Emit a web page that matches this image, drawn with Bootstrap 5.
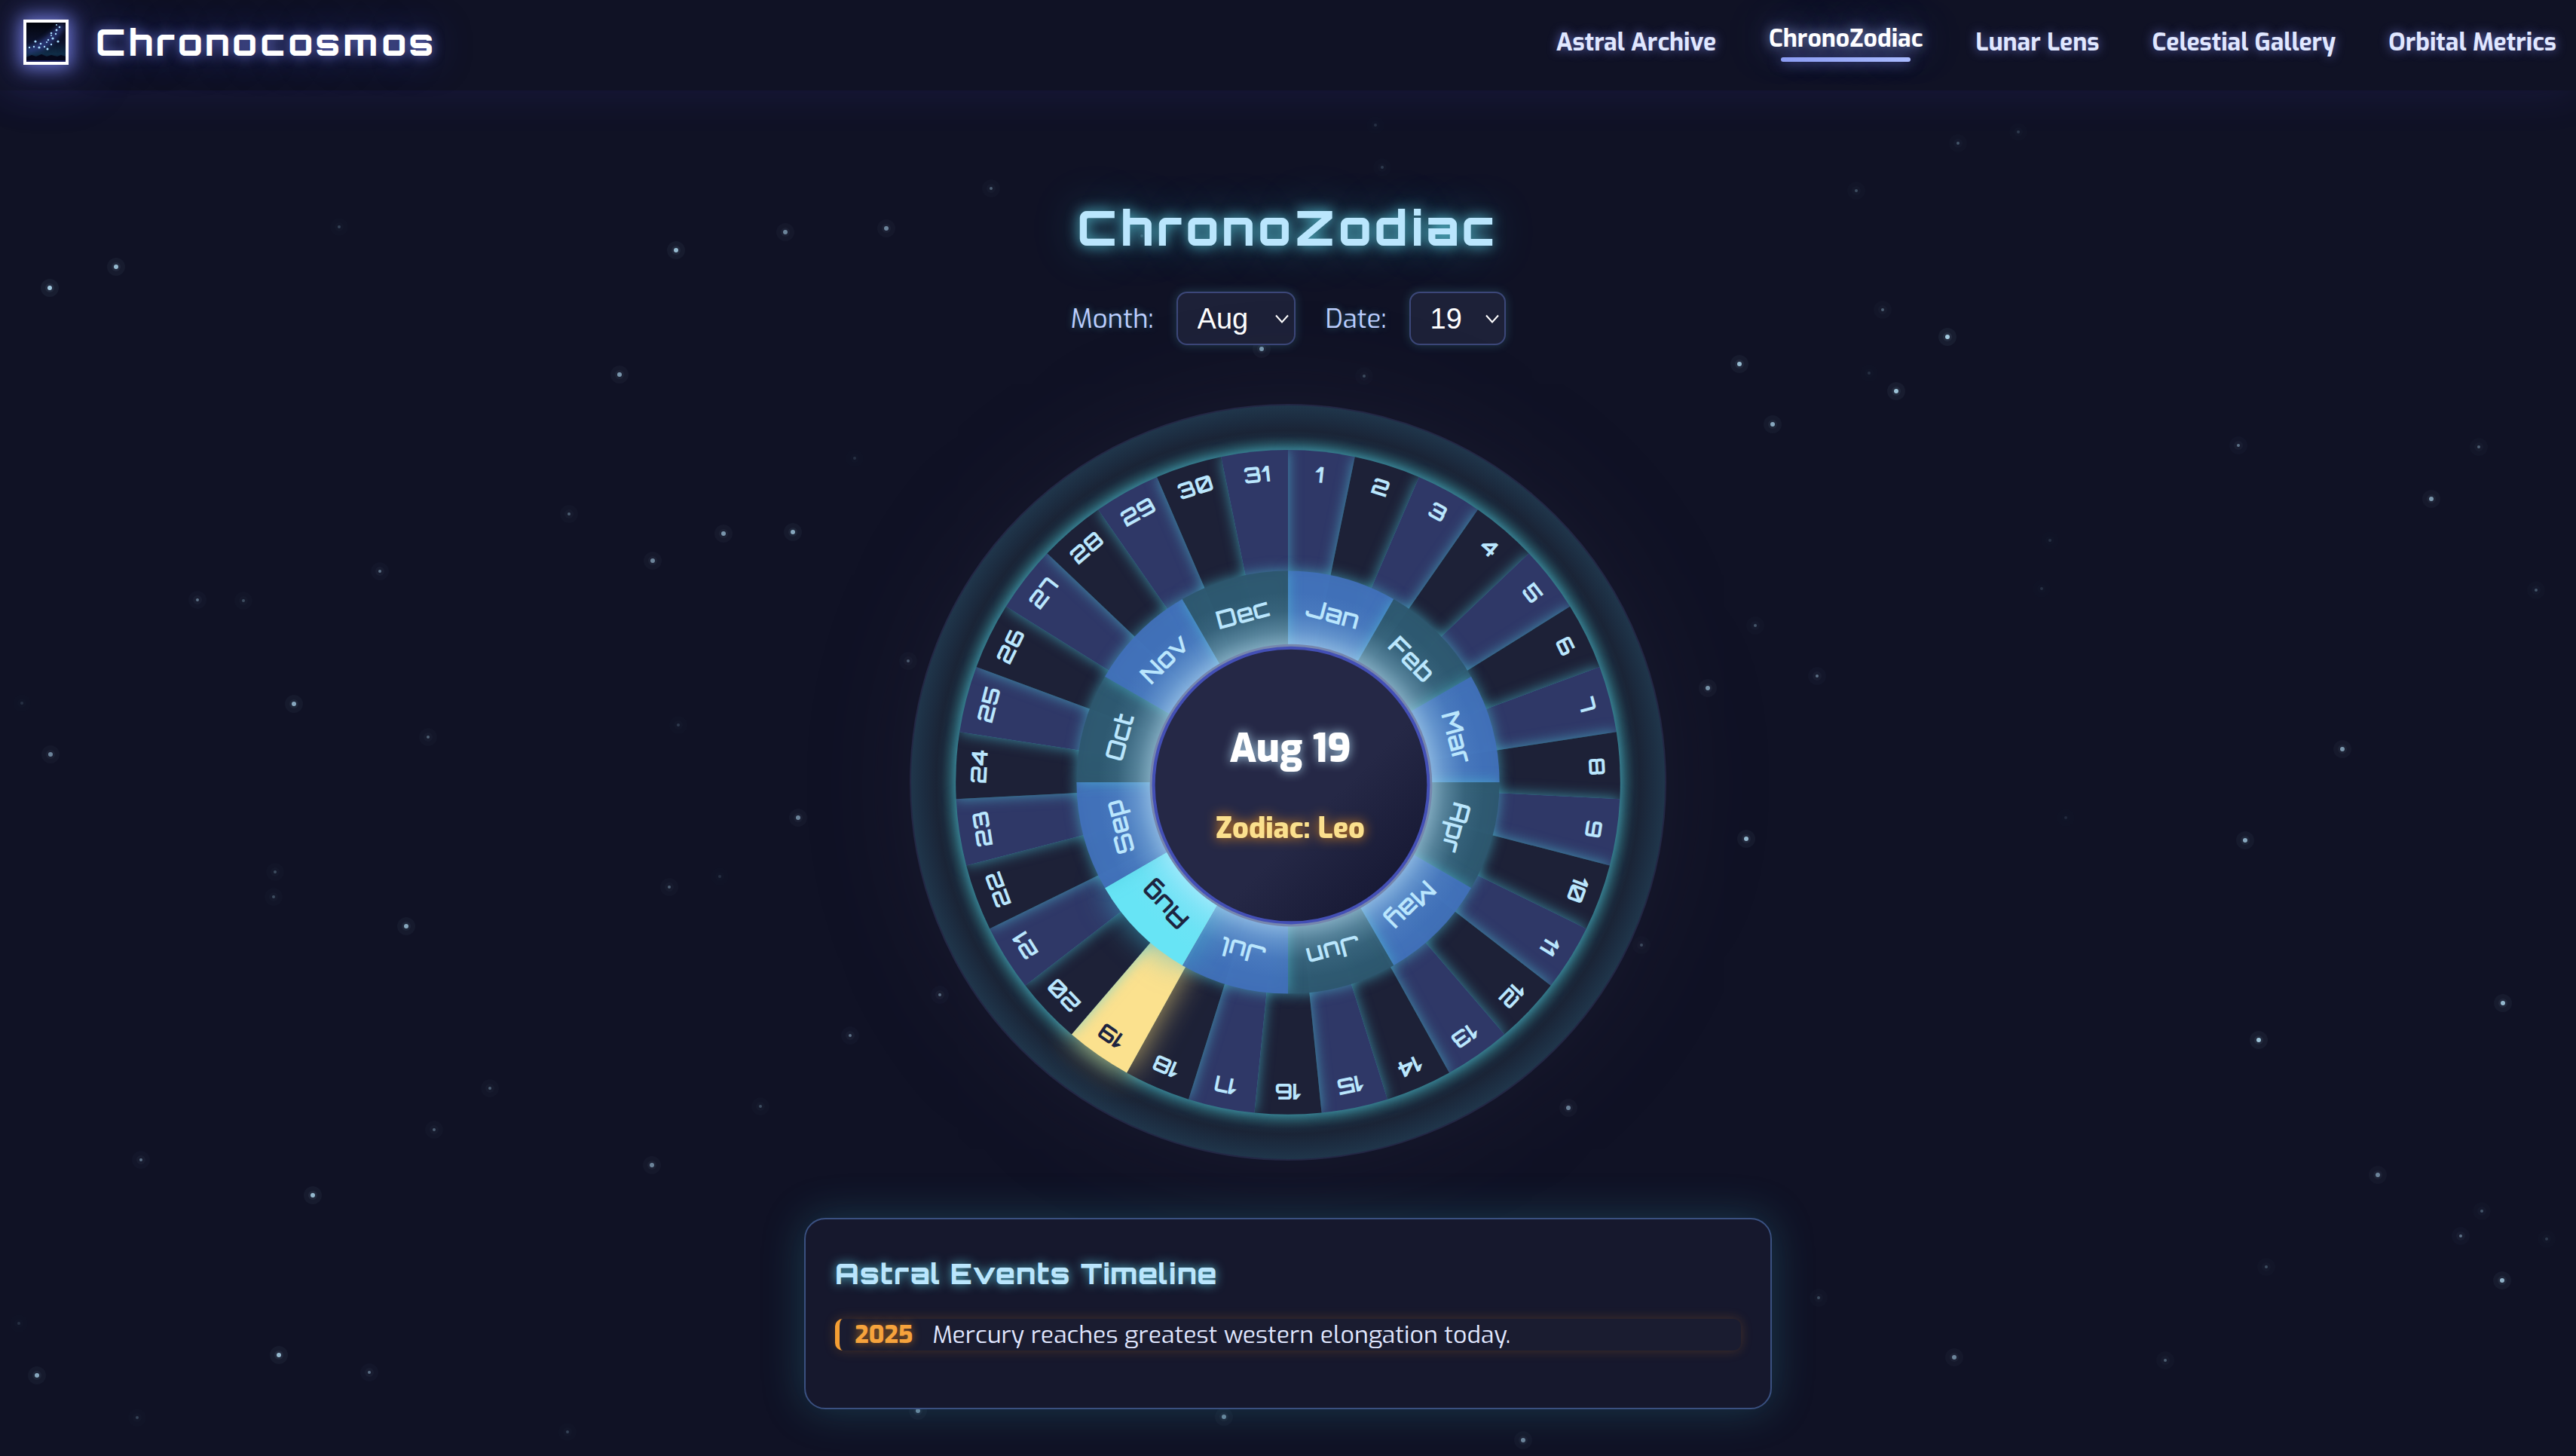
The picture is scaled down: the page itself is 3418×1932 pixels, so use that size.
<!DOCTYPE html>
<html lang="en">
<head>
<meta charset="utf-8">
<meta name="viewport" content="width=device-width, initial-scale=1">
<title>Chronocosmos – ChronoZodiac</title>
<link href="https://cdn.jsdelivr.net/npm/bootstrap@5.3.0/dist/css/bootstrap.min.css" rel="stylesheet">
<style>
:root{
  --display:"Orbitron","DejaVu Sans",Verdana,sans-serif;
  --text:"Exo",Roboto,sans-serif;
}
body{background:#101225;color:#e0e7ff;font-family:var(--text);overflow-x:hidden}
.star-field{position:absolute;inset:0;width:100%;height:100%;z-index:-1}
.star-field circle{fill:#bae6fd}

.site-bar{padding:26px 26px 34px 31px;box-shadow:0 0 60px rgba(79,70,229,.14)}
.site-logo{width:60px;height:60px;border:4px solid #fff;box-shadow:0 0 24px 4px rgba(129,140,248,.85),0 0 80px 8px rgba(79,90,220,.35)}
.site-logo svg{display:block;width:100%;height:100%}
.site-name{font:800 48px/60px var(--display);letter-spacing:4px;color:#fff;text-shadow:0 0 16px rgba(129,140,248,.75),0 0 50px rgba(60,80,220,.5)}
.site-nav{gap:70px}
.site-nav .nav-link{padding:0;font-size:32px;font-weight:700;line-height:50px;color:#e0e7ff;text-shadow:0 0 14px rgba(129,140,248,.7)}
.site-nav .nav-link.active{position:relative;padding-bottom:10px;color:#fff;text-shadow:0 0 16px rgba(165,180,252,.8),0 0 50px rgba(129,170,252,.6)}
.site-nav .nav-link.active::after{content:"";position:absolute;left:8%;right:8%;bottom:4px;height:6px;border-radius:3px;background:linear-gradient(90deg,#8b9cf2,#a9bbff);box-shadow:0 0 18px rgba(129,140,248,.7)}

.zodiac-page{padding:140px 24px 60px}
.page-title{font:800 64px/84px var(--display);letter-spacing:5px;color:#bae6fd;margin-bottom:43px;text-shadow:0 0 18px rgba(103,232,249,.85),0 0 60px rgba(56,189,210,.45)}
.picker-row{gap:40px;margin-bottom:78px}
.picker{gap:30px}
.picker label{font-size:35px;line-height:48px;color:#bccfff;text-shadow:0 0 10px rgba(103,232,249,.35)}
.picker .form-select{width:158px;height:71px;padding:0 36px 0 26px;font:400 38px/48px "Liberation Sans",Arial,sans-serif;color:#fff;background-color:#1d2138;border:2px solid #3c4779;border-radius:14px;box-shadow:0 0 14px rgba(103,232,249,.2);
  background-image:url("data:image/svg+xml,%3Csvg xmlns='http://www.w3.org/2000/svg' viewBox='0 0 18 12'%3E%3Cpath d='M1 1.5l8 9 8-9' fill='none' stroke='%23fff' stroke-width='2'/%3E%3C/svg%3E");background-position:right 7px center;background-size:18px 12px}
.picker .date-select{width:128px}

.wheel{width:1004px;max-width:100%;border-radius:50%;box-shadow:0 0 140px rgba(56,52,74,.24)}
.wheel svg{display:block;width:100%;height:auto;overflow:visible}
.wheel .slice{filter:drop-shadow(0 0 9px rgba(79,205,225,.62))}
.wheel .date-a{fill:#2f3867}
.wheel .date-b{fill:#1d2137}
.wheel .month-a{fill:#4170b9;fill-opacity:.95}
.wheel .month-b{fill:#2d566e;fill-opacity:.95}
.wheel .month-on{fill:#67e4f5;filter:drop-shadow(0 0 20px rgba(60,180,210,.7))}
.wheel .date-on{fill:#fbe18e;filter:drop-shadow(0 0 20px rgba(253,224,120,.7))}
.wheel .tick-label{fill:#bae6fd;text-anchor:middle}
.wheel .date-label{font:700 29px var(--display)}
.wheel .month-label{font:600 33px var(--display)}
.wheel .tick-label.is-on{fill:#1d2440}
.wheel .picked-date{font:800 52px var(--text);fill:#fff;text-anchor:middle;filter:drop-shadow(0 0 7px rgba(186,230,253,.8))}
.wheel .picked-sign{font:800 38px var(--text);fill:#fbe08d;text-anchor:middle;filter:drop-shadow(0 0 8px rgba(251,146,20,.9))}

.timeline{width:100%;max-width:1284px;margin-top:76px;padding:48px 39px 76px;background:#16182d;border:2px solid #3a5080;border-radius:28px;box-shadow:0 0 56px rgba(56,175,195,.26)}
.timeline h2{font:800 38px/48px var(--display);letter-spacing:1px;color:#bae6fd;margin-bottom:36px;text-shadow:0 0 14px rgba(103,232,249,.75)}
.timeline-item{gap:26px;padding-left:20px;font-size:32px;line-height:42px;color:#e0e7ff;background:#1a1c30;border-left:6px solid #f59e33;border-radius:10px;box-shadow:0 0 16px rgba(245,140,30,.22)}
.timeline-item .year{font-weight:800;color:#f6a33c;text-shadow:0 0 12px rgba(251,146,20,.6)}
</style>
<script src="https://cdn.jsdelivr.net/npm/bootstrap@5.3.0/dist/js/bootstrap.bundle.min.js"></script>
</head>
<body class="position-relative min-vh-100">
<svg class="star-field" id="stars" viewBox="0 0 3418 1932" preserveAspectRatio="xMidYMin slice" aria-hidden="true"></svg>

<header class="site-bar d-flex align-items-center justify-content-between">
  <a href="#" class="d-flex align-items-center text-decoration-none" style="gap:36px">
    <span class="site-logo">
      <svg viewBox="0 0 52 52" aria-hidden="true">
        <defs>
          <linearGradient id="lgSky" x1="0" y1="0" x2="0" y2="1"><stop offset="0" stop-color="#03050d"/><stop offset=".5" stop-color="#0c122c"/><stop offset=".8" stop-color="#102d47"/><stop offset="1" stop-color="#0b1026"/></linearGradient>
          <filter id="lgSoft" x="-30%" y="-30%" width="160%" height="160%"><feGaussianBlur stdDeviation="3"/></filter>
        </defs>
        <rect width="52" height="52" fill="url(#lgSky)"/>
        <path d="M0 34Q20 26 34 12L46 0 52 6Q38 26 22 36L0 42z" fill="#37479a" opacity=".65" filter="url(#lgSoft)"/>
        <path d="M0 46l7-3 6 2 7-3 7 3 6-2 8 2 5-2 6 2v7H0z" fill="#06081b"/>
        <path d="M0 50h52v2H0z" fill="#191d5c"/>
        <g fill="#a8dcff"><circle cx="40" cy="3" r="1"/><circle cx="44" cy="6" r="1.3"/><circle cx="40" cy="10" r="1.4"/><circle cx="39" cy="15" r="1.2"/><circle cx="33" cy="14" r="1.3"/><circle cx="33" cy="17" r="1"/><circle cx="35" cy="21" r="1.6"/><circle cx="42" cy="25" r="1.6"/><circle cx="29" cy="23" r="1.2"/><circle cx="27" cy="26" r="1.1"/><circle cx="33" cy="29" r="1.2"/><circle cx="12" cy="25" r="1.6"/><circle cx="19" cy="28" r="1.3"/><circle cx="10" cy="32" r="1.2"/><circle cx="17" cy="33" r="1.6"/><circle cx="24" cy="32" r="1.2"/><circle cx="4" cy="33" r="1.2"/><circle cx="28" cy="35" r="1.5"/></g>
      </svg>
    </span>
    <span class="site-name">Chronocosmos</span>
  </a>
  <nav class="site-nav nav flex-nowrap align-items-center" aria-label="Main">
    <a class="nav-link" href="#">Astral Archive</a>
    <a class="nav-link active" aria-current="page" href="#">ChronoZodiac</a>
    <a class="nav-link" href="#">Lunar Lens</a>
    <a class="nav-link" href="#">Celestial Gallery</a>
    <a class="nav-link" href="#">Orbital Metrics</a>
  </nav>
</header>

<main class="zodiac-page d-flex flex-column align-items-center">
  <h1 class="page-title">ChronoZodiac</h1>
  <form class="picker-row d-flex">
    <div class="picker d-flex align-items-center">
      <label for="month">Month:</label>
      <select class="form-select" id="month"></select>
    </div>
    <div class="picker d-flex align-items-center">
      <label for="date">Date:</label>
      <select class="form-select date-select" id="date"></select>
    </div>
  </form>

  <div class="wheel">
    <svg viewBox="-501 -501 1002 1002" role="img" aria-label="Zodiac wheel, Aug 19, Leo">
      <defs>
        <radialGradient id="rim" gradientUnits="userSpaceOnUse" cx="0" cy="0" r="501">
          <stop offset=".875" stop-color="#2b5a6a"/><stop offset=".895" stop-color="#21404f"/><stop offset=".915" stop-color="#1b2a3c"/><stop offset=".93" stop-color="#1a2436"/><stop offset=".96" stop-color="#1c2c40"/><stop offset="1" stop-color="#20374c"/>
        </radialGradient>
        <radialGradient id="halo" gradientUnits="userSpaceOnUse" cx="4" cy="4" r="256">
          <stop offset=".72" stop-color="#c4ecff" stop-opacity=".55"/><stop offset=".8" stop-color="#b4e4fb" stop-opacity=".3"/><stop offset=".9" stop-color="#a0d8f5" stop-opacity=".08"/><stop offset="1" stop-color="#a0d8f5" stop-opacity="0"/>
        </radialGradient>
        <linearGradient id="hub" x1="0" y1="0" x2="1" y2="1"><stop offset=".6" stop-color="#252846"/><stop offset=".9" stop-color="#161833"/></linearGradient>
      </defs>
      <circle r="500" fill="url(#rim)" stroke="#232744" stroke-width="2"/>
      <g id="dateRing"></g>
      <g id="monthRing"></g>
      <circle cx="4" cy="4" r="256" fill="url(#halo)"/>
      <g id="ringLabels"></g>
      <circle cx="4" cy="4" r="187" fill="#7686ad"/>
      <circle cx="4" cy="4" r="184" fill="#434fb5"/>
      <circle cx="4" cy="4" r="180" fill="url(#hub)"/>
      <text class="picked-date" x="3" y="-27">Aug 19</text>
      <text class="picked-sign" x="3" y="74">Zodiac: Leo</text>
    </svg>
  </div>

  <section class="timeline">
    <h2>Astral Events Timeline</h2>
    <ul class="list-unstyled mb-0">
      <li class="timeline-item d-flex"><span class="year">2025</span><span>Mercury reaches greatest western elongation today.</span></li>
    </ul>
  </section>
</main>

<script>
const months = ['Jan','Feb','Mar','Apr','May','Jun','Jul','Aug','Sep','Oct','Nov','Dec'];
const dates = Array.from({length: 31}, (_, i) => String(i + 1));
const picked = {month: 'Aug', date: '19'};
const svgEl = (name, attrs, parent) => {
  const el = document.createElementNS('http://www.w3.org/2000/svg', name);
  for (const key in attrs) el.setAttribute(key, attrs[key]);
  parent.append(el);
  return el;
};
const fillSelect = (id, items, value) => {
  const select = document.getElementById(id);
  items.forEach(item => select.add(new Option(item, item, item === value, item === value)));
};
fillSelect('month', months, picked.month);
fillSelect('date', dates, picked.date);

// Wedges overlap in order, so every one throws its glow on the one before it.
function ring(groupId, items, radius, labelRadius, kind, value) {
  const group = document.getElementById(groupId);
  const labels = document.getElementById('ringLabels');
  const step = 360 / items.length;
  const point = deg => {
    const a = deg * Math.PI / 180;
    return (radius * Math.sin(a)).toFixed(1) + ' ' + (-radius * Math.cos(a)).toFixed(1);
  };
  items.forEach((item, i) => {
    const on = item === value;
    svgEl('path', {
      class: 'slice ' + kind + (on ? '-on' : i % 2 ? '-b' : '-a'),
      d: `M0 0L${point(i * step)}A${radius} ${radius} 0 0 1 ${point((i + 1) * step)}z`
    }, group);
    svgEl('text', {
      class: `tick-label ${kind}-label` + (on ? ' is-on' : ''),
      transform: `rotate(${((i + .5) * step).toFixed(2)}) translate(0 ${-labelRadius})`,
      y: 11
    }, labels).textContent = item;
  });
}
ring('dateRing', dates, 440, 410, 'date', picked.date);
ring('monthRing', months, 280, 230, 'month', picked.month);

// x, y, brightness
const stars = [
[66,382,1],[154,354,.9],[450,301,.25],[897,332,.9],[1042,308,.6],[822,497,.7],[755,682,.4],[960,708,.7],[1052,706,.8],[866,744,.6],[504,758,.5],[262,796,.5],[323,797,.3],[390,934,.8],[568,978,.4],[900,962,.2],[67,1001,.6],[29,933,.15],
[1059,1085,.6],[365,1157,.3],[363,1190,.3],[539,1229,.8],[888,1177,.4],[955,1163,.15],[650,1444,.4],[576,1499,.4],[1009,1468,.3],[187,1539,.5],[415,1586,.9],[865,1546,.6],[25,1756,.15],[49,1825,.8],[370,1798,.9],[490,1821,.5],[182,1881,.25],[753,1900,.25],
[2678,175,.2],[2598,190,.35],[2463,253,.3],[2498,411,.4],[2584,447,1],[2308,483,.9],[2480,495,.15],[2516,519,.95],[2352,563,.8],[2970,591,.5],[3289,593,.4],[3226,662,.7],[2720,717,.15],[2709,781,.15],[3365,783,.35],[2329,830,.35],[2411,897,.5],[2266,913,.7],[3108,994,.7],
[2317,1113,.9],[2741,1085,.12],[2979,1115,.8],[3321,1331,.9],[2997,1380,.95],[3155,1559,.6],[3293,1607,.35],[3265,1640,.5],[3379,1644,.2],[3007,1681,.3],[3320,1699,.85],[2413,1722,.3],[2593,1801,.6],[2873,1805,.4],
[1315,250,.4],[1176,303,.6],[1674,463,.7],[1810,499,.3],[1825,166,.15],[1834,222,.2],[1205,877,.4],[1247,1320,.5],[1128,1374,.5],[2081,1470,.6],[2178,1254,.3],[1134,608,.15],[1218,1872,.6],[1624,1880,.6],[2021,1911,.6],[1515,313,.2]];
const sky = document.getElementById('stars');
stars.forEach(([cx, cy, b]) => {
  svgEl('circle', {cx, cy, r: 12, opacity: b * .05}, sky);
  svgEl('circle', {cx, cy, r: 6, opacity: b * .07}, sky);
  svgEl('circle', {cx, cy, r: b > .5 ? 3 : 2, opacity: b * .85}, sky);
});
</script>
</body>
</html>
